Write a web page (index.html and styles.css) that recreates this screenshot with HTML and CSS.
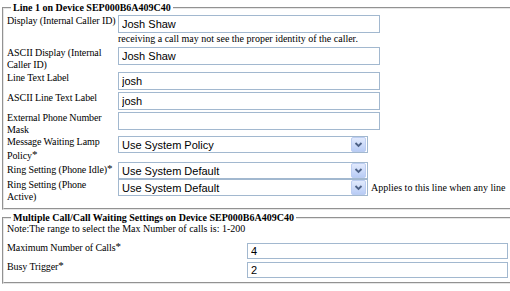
FILE: index.html
```html
<!DOCTYPE html>
<html lang="en">
<head>
  <meta charset="UTF-8">
  <title>Phone Line Configuration</title>
  <link rel="stylesheet" href="styles.css">
</head>
<body>
  <fieldset class="group">
    <legend>Line 1 on Device SEP000B6A409C40</legend>
    <div class="form">
      <div class="label">Display (Internal Caller ID)</div>
      <div class="field">
        <input class="text" value="Josh Shaw">
        <div class="hint">receiving a call may not see the proper identity of the caller.</div>
      </div>

      <div class="label">ASCII Display (Internal<br>Caller ID)</div>
      <div class="field"><input class="text" value="Josh Shaw"></div>

      <div class="label">Line Text Label</div>
      <div class="field"><input class="text" value="josh"></div>

      <div class="label">ASCII Line Text Label</div>
      <div class="field"><input class="text" value="josh"></div>

      <div class="label">External Phone Number<br>Mask</div>
      <div class="field"><input class="text" value=""></div>

      <div class="label tight">Message Waiting Lamp<br>Policy<span class="req">*</span></div>
      <div class="field pick">
        <div class="select">
          <span class="value">Use System Policy</span>
          <span class="arrow"><svg width="15" height="15" viewBox="0 0 15 15"><defs><linearGradient id="btn1" x1="0" y1="0" x2="0" y2="1"><stop offset="0" stop-color="#e3ebfd"/><stop offset="1" stop-color="#b7cbf5"/></linearGradient></defs><rect x="0.5" y="0.5" width="14" height="14" rx="1.5" fill="url(#btn1)" stroke="#bccdf1"/><path d="M4.5 6 L7.5 9 L10.5 6" fill="none" stroke="#4d6185" stroke-width="1.8"/></svg></span>
        </div>
      </div>

      <div class="label tight">Ring Setting (Phone Idle)<span class="req">*</span></div>
      <div class="field pick">
        <div class="select">
          <span class="value">Use System Default</span>
          <span class="arrow"><svg width="15" height="15" viewBox="0 0 15 15"><defs><linearGradient id="btn2" x1="0" y1="0" x2="0" y2="1"><stop offset="0" stop-color="#e3ebfd"/><stop offset="1" stop-color="#b7cbf5"/></linearGradient></defs><rect x="0.5" y="0.5" width="14" height="14" rx="1.5" fill="url(#btn2)" stroke="#bccdf1"/><path d="M4.5 6 L7.5 9 L10.5 6" fill="none" stroke="#4d6185" stroke-width="1.8"/></svg></span>
        </div>
      </div>

      <div class="label tight">Ring Setting (Phone<br>Active)</div>
      <div class="field pick inline">
        <div class="select">
          <span class="value">Use System Default</span>
          <span class="arrow"><svg width="15" height="15" viewBox="0 0 15 15"><defs><linearGradient id="btn3" x1="0" y1="0" x2="0" y2="1"><stop offset="0" stop-color="#e3ebfd"/><stop offset="1" stop-color="#b7cbf5"/></linearGradient></defs><rect x="0.5" y="0.5" width="14" height="14" rx="1.5" fill="url(#btn3)" stroke="#bccdf1"/><path d="M4.5 6 L7.5 9 L10.5 6" fill="none" stroke="#4d6185" stroke-width="1.8"/></svg></span>
        </div>
        <span class="note">Applies to this line when any line</span>
      </div>
    </div>
  </fieldset>

  <fieldset class="group calls">
    <legend>Multiple Call/Call Waiting Settings on Device SEP000B6A409C40</legend>
    <div class="range">Note:The range to select the Max Number of calls is: 1-200</div>
    <div class="form">
      <div class="label">Maximum Number of Calls<span class="req">*</span></div>
      <div class="field"><input class="text" value="4"></div>

      <div class="label">Busy Trigger<span class="req">*</span></div>
      <div class="field"><input class="text" value="2"></div>
    </div>
  </fieldset>
</body>
</html>
```

FILE: styles.css
```css
html, body { margin: 0; overflow: hidden; background: #fff; }
body { padding: 2px 0 0 2px; font: 10px/12px "Liberation Serif", "Times New Roman", serif; color: #000; }

.group { width: 580px; margin: 0; padding: 0 0 5px 3px; border: 2px groove #e6e6e6; }
.group + .group { margin-top: 3px; }
.group legend { margin-left: 4px; padding: 0 2px; font-weight: bold; line-height: 12px; }

.form { display: grid; grid-template-columns: 111px auto; justify-content: start; align-items: start; }
.label { padding-top: 1px; white-space: nowrap; letter-spacing: -0.1px; }
.label.tight { padding-top: 0; }
.req { font-size: 11px; vertical-align: 1px; }
.field { padding: 1px 0; }
.field.pick { padding: 0; }
.field.inline { display: flex; align-items: center; white-space: nowrap; }

.text { display: block; box-sizing: border-box; width: 262px; height: 18px; margin: 0; padding: 0 3px; border: 1px solid #a2b8cf; font: 11px "Liberation Sans", Arial, sans-serif; color: #000; background: #fff; }
.hint { line-height: 12px; white-space: nowrap; }

.calls { padding-bottom: 4px; }
.calls legend { line-height: 10px; }
.calls .range { margin-bottom: 5px; }
.calls .form { grid-template-columns: 240px auto; }
.calls .label { padding-top: 0; }
.calls .field { padding: 3px 0 0; }
.calls .text { width: 261px; height: 16px; }

.select { display: flex; align-items: center; box-sizing: border-box; width: 250px; height: 17px; padding: 0 1px 0 3px; border: 1px solid #a2b8cf; font: 11px "Liberation Sans", Arial, sans-serif; background: #fff; }
.select .value { flex: 1; }
.select .arrow { display: flex; }
.note { margin-left: 3px; }
```
